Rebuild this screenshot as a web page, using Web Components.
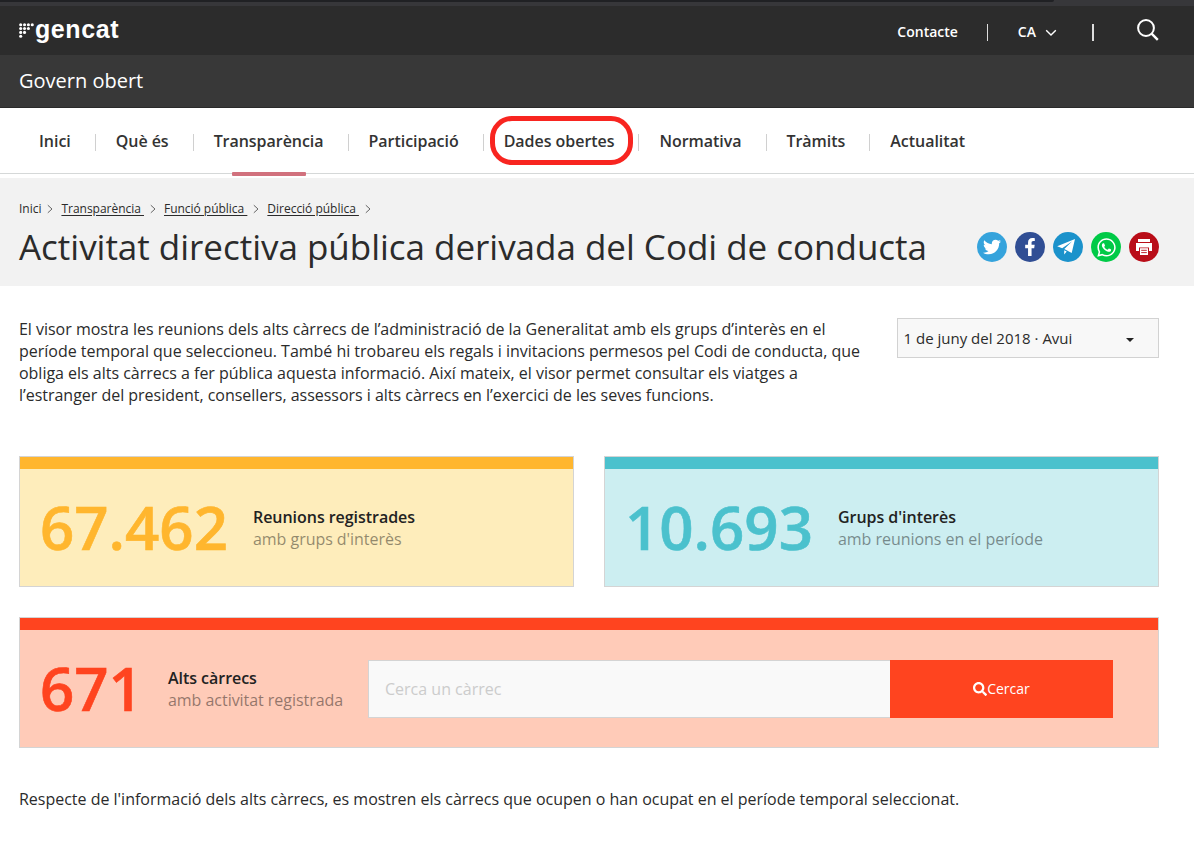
<!DOCTYPE html>
<html lang="ca">
<head>
<meta charset="utf-8">
<title>Govern obert</title>
<style>
    body {
        margin: 0;
        background: #fff;
        color: #2b2b2b;
        font-family: "Open Sans", "Noto Sans", sans-serif;
        font-size: 16px;
        line-height: 22px;
        height: 852px;
        overflow: hidden;
    }
</style>
</head>
<body>

<site-header></site-header>

<site-nav>
    <nav-item>Inici</nav-item>
    <nav-item>Què és</nav-item>
    <nav-item active>Transparència</nav-item>
    <nav-item>Participació</nav-item>
    <nav-item marked>Dades obertes</nav-item>
    <nav-item>Normativa</nav-item>
    <nav-item>Tràmits</nav-item>
    <nav-item last>Actualitat</nav-item>
</site-nav>

<page-title>
    <crumb-item slot="crumbs" plain>Inici</crumb-item>
    <crumb-item slot="crumbs">Transparència&nbsp;</crumb-item>
    <crumb-item slot="crumbs">Funció pública&nbsp;</crumb-item>
    <crumb-item slot="crumbs">Direcció pública&nbsp;</crumb-item>
    Activitat directiva pública derivada del Codi de conducta
    <share-links slot="share"></share-links>
</page-title>

<main-content>
    <intro-text slot="intro">El visor mostra les reunions dels alts càrrecs de l’administració de la Generalitat amb els grups d’interès en el<br>període temporal que seleccioneu. També hi trobareu els regals i invitacions permesos pel Codi de conducta, que<br>obliga els alts càrrecs a fer pública aquesta informació. Així mateix, el visor permet consultar els viatges a<br>l’estranger del president, consellers, assessors i alts càrrecs en l’exercici de les seves funcions.</intro-text>
    <period-select slot="period">1 de juny del 2018 · Avui</period-select>

    <stat-card number="67.462" style="--strong:#ffb62e; --soft:#feedbb">
        Reunions registrades
        <span slot="detail">amb grups d'interès</span>
    </stat-card>
    <stat-card number="10.693" style="--strong:#4bc1cd; --soft:#cceef1">
        Grups d'interès
        <span slot="detail">amb reunions en el període</span>
    </stat-card>
    <stat-card wide number="671" style="--strong:#ff441f; --soft:#ffcbb8">
        Alts càrrecs
        <span slot="detail">amb activitat registrada</span>
        <search-box slot="extra"></search-box>
    </stat-card>

    <span slot="note">Respecte de l'informació dels alts càrrecs, es mostren els càrrecs que ocupen o han ocupat en el període temporal seleccionat.</span>
</main-content>

<script>
class SiteHeader extends HTMLElement {
    constructor() {
        super();
        this.shadow = this.attachShadow({ mode: 'open' });
    }

    connectedCallback() {
        this.render();
    }

    render() {
        // logo dots: [column, row]
        const dots = [[0,0],[1,0],[2,0],[3,0],[0,1],[1,1],[2,1],[0,2],[1,2],[0,3]];

        this.shadow.innerHTML =
        /*html*/`
        <div class="edge"><i></i></div>
        <div class="top">
            <div class="logo">
                <svg width="15" height="15" viewBox="0 0 15 15" fill="#fff">
                    ${dots.map(([c, r]) => `<circle cx="${1.7 + c * 3.85}" cy="${1.7 + r * 3.85}" r="1.55"/>`).join('')}
                </svg>
                <b>gencat</b>
            </div>
            <div class="tools">
                <span class="contact">Contacte</span>
                <i class="bar"></i>
                <span class="lang">CA</span>
                <svg class="chev" width="12" height="8" viewBox="0 0 12 8" fill="none" stroke="#fff" stroke-width="1.4"><path d="M1.2 1.2 6 6l4.8-4.8"/></svg>
                <i class="bar two"></i>
                <svg class="find" width="22" height="22" viewBox="0 0 22 22" fill="none" stroke="#fff" stroke-width="2"><circle cx="9" cy="9" r="7.9"/><path d="m14.6 14.6 6.2 6.2" stroke-width="2.4"/></svg>
            </div>
        </div>
        <div class="sub">Govern obert</div>

        <style>
            :host {
                display: block;
                color: #fff;
            }

            .edge {
                height: 6px;
                background: #37373a;
            }

            .edge i {
                display: block;
                width: 1054px;
                height: 2px;
                background: #202124;
                border-radius: 0 0 3px 0;
            }

            .top {
                height: 49px;
                background: #2c2c2c;
                display: flex;
                justify-content: space-between;
                padding: 0 35.5px 0 19px;
            }

            .logo {
                display: flex;
                gap: 1px;
                padding-top: 9px;
            }

            .logo svg {
                margin-top: 8px;
            }

            .logo b {
                font: bold 25px/28px "Liberation Sans", Arial, sans-serif;
                letter-spacing: 0.6px;
            }

            .tools {
                display: flex;
                align-items: center;
                height: 52px;
                font-size: 14px;
                font-weight: 600;
            }

            .bar {
                width: 1.5px;
                height: 17px;
                margin: 0 29.5px 0 29px;
                background: #ddd;
            }

            .bar.two {
                margin: 0 43px 0 35px;
            }

            .chev {
                margin: 2px 0 0 9px;
            }

            .find {
                margin-bottom: 4px;
            }

            .sub {
                box-sizing: border-box;
                height: 53px;
                padding-left: 19px;
                font-size: 20px;
                line-height: 51px;
                background: #383838;
                border-bottom: 1px solid #2a2a2a;
            }
        </style>
        `;
    }
}
customElements.define('site-header', SiteHeader);


class SiteNav extends HTMLElement {
    constructor() {
        super();
        this.shadow = this.attachShadow({ mode: 'open' });
    }

    connectedCallback() {
        this.render();
    }

    render() {
        this.shadow.innerHTML =
        /*html*/`
        <nav><slot></slot></nav>

        <style>
            :host {
                display: block;
                height: 70px;
            }

            nav {
                display: flex;
                align-items: center;
                height: 65px;
                padding-left: 19px;
                border-bottom: 1px solid #d5d8d8;
            }
        </style>
        `;
    }
}
customElements.define('site-nav', SiteNav);


class NavItem extends HTMLElement {
    constructor() {
        super();
        this.shadow = this.attachShadow({ mode: 'open' });
    }

    connectedCallback() {
        this.render();
    }

    render() {
        this.shadow.innerHTML =
        /*html*/`
        <a><slot></slot></a>

        <style>
            :host {
                display: block;
                padding: 0 24px 0 20px;
                border-right: 1px solid #d0d0d0;
                height: 17px;
                margin-top: 4px;
                font-weight: 600;
                letter-spacing: -0.04px;
                color: #333;
                white-space: nowrap;
            }

            :host([last]) {
                border: 0;
            }

            a {
                display: block;
                position: relative;
                line-height: 22px;
                margin-top: -4px;
            }

            :host([active]) a::after {
                content: "";
                position: absolute;
                left: 18px;
                right: 18px;
                top: 42px;
                height: 4px;
                border-radius: 1px;
                background: #d1717d;
            }

            /* hand-drawn style highlight around the item */
            :host([marked]) a::after {
                content: "";
                position: absolute;
                left: -14px;
                right: -19px;
                top: -14px;
                height: 39px;
                border: 5px solid #f82520;
                border-radius: 22px;
            }
        </style>
        `;
    }
}
customElements.define('nav-item', NavItem);


class CrumbItem extends HTMLElement {
    constructor() {
        super();
        this.shadow = this.attachShadow({ mode: 'open' });
    }

    connectedCallback() {
        this.render();
    }

    render() {
        this.shadow.innerHTML =
        /*html*/`
        <a><slot></slot></a>
        <svg width="6" height="10" viewBox="0 0 6 10" fill="none" stroke="#666" stroke-width="1"><path d="M.8 1.2 5 5 .8 8.8"/></svg>

        <style>
            :host {
                display: flex;
                align-items: center;
                gap: 6px;
            }

            a {
                text-decoration: underline;
                text-underline-offset: 2px;
                letter-spacing: -0.02px;
            }

            :host([plain]) a {
                text-decoration: none;
            }

            svg {
                margin-top: 1px;
            }
        </style>
        `;
    }
}
customElements.define('crumb-item', CrumbItem);


class PageTitle extends HTMLElement {
    constructor() {
        super();
        this.shadow = this.attachShadow({ mode: 'open' });
    }

    connectedCallback() {
        this.render();
    }

    render() {
        this.shadow.innerHTML =
        /*html*/`
        <div class="crumbs"><slot name="crumbs"></slot></div>
        <div class="row">
            <h1><slot></slot></h1>
            <slot name="share"></slot>
        </div>

        <style>
            :host {
                display: block;
                box-sizing: border-box;
                height: 108px;
                padding: 22px 35px 0 19px;
                background: #f2f2f2;
            }

            .crumbs {
                display: flex;
                gap: 8px;
                font-size: 12px;
                line-height: 17px;
            }

            .row {
                display: flex;
                justify-content: space-between;
                align-items: center;
                height: 60px;
            }

            h1 {
                margin: 0;
                font-size: 35px;
                font-weight: 400;
                line-height: 50px;
                letter-spacing: -0.02px;
                white-space: nowrap;
            }
        </style>
        `;
    }
}
customElements.define('page-title', PageTitle);


class ShareLinks extends HTMLElement {
    constructor() {
        super();
        this.shadow = this.attachShadow({ mode: 'open' });
    }

    connectedCallback() {
        this.render();
    }

    render() {
        this.shadow.innerHTML =
        /*html*/`
        <a style="background:#35a3dc"><svg width="18" height="18" viewBox="0 0 512 512"><path d="M459.37 151.716c.325 4.548.325 9.097.325 13.645 0 138.72-105.583 298.558-298.558 298.558-59.452 0-114.68-17.219-161.137-47.106 8.447.974 16.568 1.299 25.34 1.299 49.055 0 94.213-16.568 130.274-44.832-46.132-.975-84.792-31.188-98.112-72.772 6.498.974 12.995 1.624 19.818 1.624 9.421 0 18.843-1.3 27.614-3.573-48.081-9.747-84.143-51.98-84.143-102.985v-1.299c13.969 7.797 30.214 12.67 47.431 13.319-28.264-18.843-46.781-51.005-46.781-87.391 0-19.492 5.197-37.36 14.294-52.954 51.655 63.675 129.3 105.258 216.365 109.807-1.624-7.797-2.599-15.918-2.599-24.04 0-57.828 46.782-104.934 104.934-104.934 30.213 0 57.502 12.67 76.67 33.137 23.715-4.548 46.456-13.32 66.599-25.34-7.798 24.366-24.366 44.833-46.132 57.827 21.117-2.273 41.584-8.122 60.426-16.243-14.292 20.791-32.161 39.308-52.628 54.253z"/></svg></a>
        <a style="background:#304e94"><svg width="18" height="18" viewBox="0 0 320 512"><path d="M279.14 288l14.22-92.66h-88.91v-60.13c0-25.35 12.42-50.06 52.24-50.06h40.42V6.26S260.43 0 225.36 0c-73.22 0-121.08 44.38-121.08 124.72v70.62H22.89V288h81.39v224h100.17V288z"/></svg></a>
        <a style="background:#1b92cb"><svg width="30" height="30" viewBox="0 0 30 30"><path d="M22 7 4.2 14.2 9.2 16.2 19.2 9.2 11.3 17 18.7 20.9ZM11.2 18.2V22.6L13.7 19.5Z"/></svg></a>
        <a style="background:#00ca47"><svg width="19" height="19" viewBox="0 24 448 464"><path d="M380.9 97.1C339 55.1 283.2 32 223.9 32c-122.4 0-222 99.6-222 222 0 39.1 10.2 77.3 29.6 111L0 480l117.7-30.9c32.4 17.7 68.9 27 106.1 27h.1c122.3 0 224.1-99.6 224.1-222 0-59.3-25.2-115-67.1-157zm-157 341.6c-33.2 0-65.7-8.9-94-25.7l-6.7-4-69.8 18.3L72 359.2l-4.4-7c-18.5-29.4-28.2-63.3-28.2-98.2 0-101.7 82.8-184.5 184.6-184.5 49.3 0 95.6 19.2 130.4 54.1 34.8 34.9 56.2 81.2 56.1 130.5 0 101.8-84.9 184.6-186.6 184.6zm101.2-138.2c-5.5-2.8-32.8-16.2-37.9-18-5.1-1.9-8.8-2.8-12.5 2.8-3.7 5.6-14.3 18-17.6 21.8-3.2 3.7-6.5 4.2-12 1.4-32.6-16.3-54-29.1-75.5-66-5.7-9.8 5.7-9.1 16.3-30.3 1.8-3.7.9-6.9-.5-9.7-1.4-2.8-12.5-30.1-17.1-41.2-4.5-10.8-9.1-9.3-12.5-9.5-3.2-.2-6.9-.2-10.6-.2-3.7 0-9.7 1.4-14.8 6.9-5.1 5.6-19.4 19-19.4 46.3 0 27.3 19.9 53.7 22.6 57.4 2.8 3.7 39.1 59.7 94.8 83.8 35.2 15.2 49 16.5 66.6 13.9 10.7-1.6 32.8-13.4 37.4-26.4 4.6-13 4.6-24.1 3.2-26.4-1.3-2.5-5-3.9-10.5-6.6z"/></svg></a>
        <a style="background:#b90d18"><svg width="30" height="30" viewBox="0 0 30 30"><path d="M9 7h12v3H9ZM7 11h16v8h-3v-3.6H10V19H7ZM11 16.3h8V23h-8Z"/><path d="M12.2 18.3h5.6M12.2 20.6h5.6" stroke="#b90d18" stroke-width=".9"/></svg></a>

        <style>
            :host {
                display: flex;
                gap: 8px;
            }

            a {
                display: flex;
                align-items: center;
                justify-content: center;
                width: 30px;
                height: 30px;
                border-radius: 50%;
            }

            svg {
                fill: #fff;
            }
        </style>
        `;
    }
}
customElements.define('share-links', ShareLinks);


class IntroText extends HTMLElement {
    constructor() {
        super();
        this.shadow = this.attachShadow({ mode: 'open' });
    }

    connectedCallback() {
        this.render();
    }

    render() {
        this.shadow.innerHTML =
        /*html*/`
        <slot></slot>

        <style>
            :host {
                display: block;
                white-space: nowrap;
                letter-spacing: -0.02px;
            }
        </style>
        `;
    }
}
customElements.define('intro-text', IntroText);


class PeriodSelect extends HTMLElement {
    constructor() {
        super();
        this.shadow = this.attachShadow({ mode: 'open' });
    }

    connectedCallback() {
        this.render();
    }

    render() {
        this.shadow.innerHTML =
        /*html*/`
        <span><slot></slot></span>
        <svg width="8" height="4" viewBox="0 0 8 4" fill="#222"><path d="M0 0h8L4 4z"/></svg>

        <style>
            :host {
                display: flex;
                align-items: center;
                justify-content: space-between;
                box-sizing: border-box;
                width: 262px;
                height: 40px;
                padding: 0 24px 0 5.5px;
                background: #f8f8f8;
                border: 1px solid #d2d2d2;
                font-size: 15px;
            }

            svg {
                margin-top: 3px;
            }
        </style>
        `;
    }
}
customElements.define('period-select', PeriodSelect);


class StatCard extends HTMLElement {
    constructor() {
        super();
        this.shadow = this.attachShadow({ mode: 'open' });
    }

    connectedCallback() {
        this.render();
    }

    render() {
        this.shadow.innerHTML =
        /*html*/`
        <div class="body">
            <div class="number">${this.getAttribute('number')}</div>
            <div class="text">
                <b><slot></slot></b>
                <div class="detail"><slot name="detail"></slot></div>
            </div>
            <slot name="extra"></slot>
        </div>

        <style>
            :host {
                display: block;
                box-sizing: border-box;
                height: 131px;
                border: 1px solid #d4d4d4;
                background: var(--soft);
            }

            :host([wide]) {
                grid-column: 1 / 3;
            }

            .body {
                display: flex;
                align-items: center;
                box-sizing: border-box;
                height: 129px;
                padding: 0 45px 0 20px;
                border-top: 12px solid var(--strong);
            }

            .number {
                width: 213px;
                margin-bottom: 2px;
                color: var(--strong);
                font-size: 60px;
                font-weight: 600;
                line-height: 60px;
                -webkit-text-stroke: 0.6px var(--strong);
            }

            :host([wide]) .number {
                width: 128px;
            }

            .text {
                white-space: nowrap;
                letter-spacing: -0.04px;
            }

            b {
                font-weight: 600;
                color: #222;
            }

            .detail {
                color: #000;
                opacity: 0.42;
            }

            ::slotted([slot="extra"]) {
                margin-left: auto;
            }
        </style>
        `;
    }
}
customElements.define('stat-card', StatCard);


class SearchBox extends HTMLElement {
    constructor() {
        super();
        this.shadow = this.attachShadow({ mode: 'open' });
    }

    connectedCallback() {
        this.render();
    }

    render() {
        this.shadow.innerHTML =
        /*html*/`
        <input type="text" placeholder="Cerca un càrrec">
        <button>
            <svg width="14" height="14" viewBox="0 0 512 512" fill="#fff"><path d="M505 442.7L405.3 343c-4.5-4.5-10.6-7-17-7H372c27.6-35.3 44-79.7 44-128C416 93.1 322.9 0 208 0S0 93.1 0 208s93.1 208 208 208c48.3 0 92.7-16.4 128-44v16.3c0 6.4 2.5 12.5 7 17l99.7 99.7c9.4 9.4 24.6 9.4 33.9 0l28.3-28.3c9.4-9.4 9.4-24.6.1-34zM208 336c-70.7 0-128-57.2-128-128 0-70.7 57.2-128 128-128 70.7 0 128 57.2 128 128 0 70.7-57.2 128-128 128z"/></svg>
            <span>Cercar</span>
        </button>

        <style>
            :host {
                display: flex;
                width: 745px;
                height: 58px;
            }

            input {
                box-sizing: border-box;
                flex: 1;
                min-width: 0;
                padding: 0 16px;
                border: 1px solid #d4d4d4;
                border-right: 0;
                background: #f9f9f9;
                font: inherit;
            }

            input::placeholder {
                color: #ccc;
            }

            button {
                display: flex;
                align-items: center;
                justify-content: center;
                width: 223px;
                padding: 0;
                border: 0;
                background: #ff441f;
                color: #fff;
                font: 500 14px "Open Sans", sans-serif;
            }
        </style>
        `;
    }
}
customElements.define('search-box', SearchBox);


class MainContent extends HTMLElement {
    constructor() {
        super();
        this.shadow = this.attachShadow({ mode: 'open' });
    }

    connectedCallback() {
        this.render();
    }

    render() {
        this.shadow.innerHTML =
        /*html*/`
        <div class="intro">
            <slot name="intro"></slot>
            <slot name="period"></slot>
        </div>
        <div class="cards"><slot></slot></div>
        <p><slot name="note"></slot></p>

        <style>
            :host {
                display: block;
                padding: 32px 35px 0 19px;
            }

            .intro {
                display: flex;
                justify-content: space-between;
                height: 138px;
            }

            .cards {
                display: grid;
                grid-template-columns: 1fr 1fr;
                gap: 30px;
            }

            p {
                margin: 40px 0 0;
                letter-spacing: -0.01px;
            }
        </style>
        `;
    }
}
customElements.define('main-content', MainContent);
</script>
</body>
</html>
